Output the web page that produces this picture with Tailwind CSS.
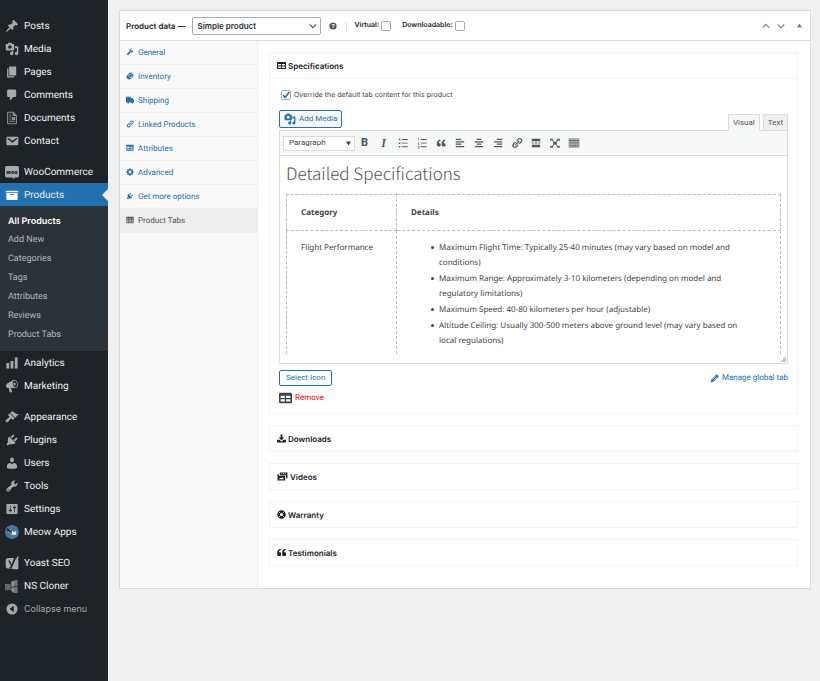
<!DOCTYPE html>
<html lang="en">
<head>
<meta charset="utf-8">
<meta name="viewport" content="width=device-width, initial-scale=1">
<title>Edit product</title>
<script src="https://cdn.jsdelivr.net/npm/@tailwindcss/browser@4"></script>
</head>
<body class="bg-[#f0f0f1] font-['Roboto','Liberation_Sans',sans-serif] text-[#3c434a] antialiased [text-rendering:geometricPrecision]">
<svg class="hidden" aria-hidden="true">
  <symbol id="pin" viewBox="0 0 20 20"><path d="M10.44 3.02l1.82-1.82 6.36 6.35-1.83 1.82c-1.05-.68-2.48-.57-3.41.36l-.75.75c-.92.93-1.04 2.35-.35 3.41l-1.83 1.82-2.41-2.41-2.8 2.79c-.42.42-3.38 2.71-3.8 2.29s1.86-3.39 2.28-3.81l2.79-2.79L4.1 9.36l1.83-1.82c1.05.69 2.48.57 3.4-.36l.75-.75c.93-.92 1.05-2.35.36-3.41z"/></symbol>
  <symbol id="media" viewBox="0 0 20 20"><path d="M13 11V4c0-.55-.45-1-1-1h-1.67L9 1H5L3.67 3H2c-.55 0-1 .45-1 1v7c0 .55.45 1 1 1h10c.55 0 1-.45 1-1zM7 4.5c1.38 0 2.5 1.12 2.5 2.5S8.38 9.5 7 9.5 4.5 8.38 4.5 7 5.62 4.5 7 4.5zM14 6h5v10.5c0 1.38-1.12 2.5-2.5 2.5S14 17.88 14 16.5s1.12-2.5 2.5-2.5c.17 0 .34.02.5.05V9h-3V6zm-4 8.05V13h2v3.5c0 1.38-1.12 2.5-2.5 2.5S7 17.88 7 16.5 8.12 14 9.5 14c.17 0 .34.02.5.05z"/></symbol>
  <symbol id="page" viewBox="0 0 20 20"><path d="M6 15V2h10v13H6zm-1 1h8v2H3V5h2v11z"/></symbol>
  <symbol id="comment" viewBox="0 0 20 20"><path d="M5 2h9c1.1 0 2 .9 2 2v7c0 1.1-.9 2-2 2h-2l-5 5v-5H5c-1.1 0-2-.9-2-2V4c0-1.1.9-2 2-2z"/></symbol>
  <symbol id="doc" viewBox="0 0 20 20"><path opacity=".8" fill-rule="evenodd" d="M3 1h9l5 5v13H3V1zm1.500 1.500v15h11V7H11V2.500zM6 5h3v1.300H6zm0 3h3v1.300H6zm0 3h3v1.300H6zm0 3h8v1.500H6zM10 8.500h4.500V13H10z"/></symbol>
  <symbol id="mail" viewBox="0 0 20 20"><path d="M3.870 4h13.250C18.370 4 19 4.590 19 5.790v8.420c0 1.190-.63 1.790-1.880 1.790H3.870c-1.250 0-1.880-.6-1.880-1.790V5.790c0-1.200.63-1.790 1.880-1.790zm6.620 8.600l6.740-5.530c.24-.2.43-.66.13-1.070-.29-.41-.82-.42-1.170-.17l-5.700 3.860L4.800 5.830c-.35-.25-.88-.24-1.170.17-.3.410-.11.870.13 1.070z"/></symbol>
  <symbol id="woo" viewBox="0 0 26 26"><path d="M3 2h20a3 3 0 0 1 3 3v15a3 3 0 0 1-3 3h-6l1 3-5-3H3a3 3 0 0 1-3-3V5a3 3 0 0 1 3-3z"/><text x="13" y="16" text-anchor="middle" font-family="Inter, sans-serif" font-weight="900" font-size="10" fill="#1d2327">woo</text></symbol>
  <symbol id="box" viewBox="0 0 20 20"><path d="M19 4v2H1V4h18zM2 7h16v10H2V7zm11 3V9H7v1h6z"/></symbol>
  <symbol id="bars" viewBox="0 0 20 20"><path d="M18 18V2h-4v16h4zm-6 0V7H8v11h4zm-6 0v-8H2v8h4z"/></symbol>
  <symbol id="horn" viewBox="0 0 20 20"><path d="M18.150 5.940c.46 1.620.38 3.220-.02 4.480-.42 1.280-1.260 2.180-2.300 2.480-.16.060-.26.060-.4.060-.06.020-.12.020-.18.020-.06.020-.14.020-.22.020h-6.800l2.220 5.500c.02.140-.06.260-.14.340-.08.100-.24.160-.34.160H6.950c-.1 0-.26-.06-.34-.16-.08-.08-.16-.2-.14-.34l-1-5.500H4.250l-.02-.02c-.5.060-1.080-.18-1.540-.62s-.88-1.080-1.060-1.880c-.24-.8-.2-1.560-.02-2.200.18-.62.58-1.080 1.060-1.300l.02-.02 9-5.400c.1-.06.180-.1.240-.16.060-.04.140-.08.240-.12.160-.08.280-.12.500-.18 1.040-.3 2.240.1 3.220.98s1.840 2.240 2.260 3.860zm-2.580 5.980h-.02c.4-.1.740-.34 1.040-.7.580-.7.860-1.760.86-3.040 0-.64-.1-1.300-.28-1.980-.34-1.360-1.020-2.500-1.780-3.240s-1.680-1.100-2.460-.88c-.82.220-1.400.960-1.700 2-.32 1.040-.28 2.360.060 3.720.38 1.360 1 2.500 1.800 3.240.78.740 1.620 1.100 2.480.88zm-2.540-7.080c.22-.04.42-.02.62.04.38.160.760.480 1.020 1s.42 1.200.42 1.780c0 .3-.04.560-.12.800-.18.480-.44.840-.86.940-.34.100-.8-.06-1.140-.4s-.64-.86-.78-1.500c-.18-.62-.12-1.240.02-1.720s.48-.84.82-.94z"/></symbol>
  <symbol id="brush" viewBox="0 0 20 20"><path d="M14.480 11.060L7.410 3.990l1.500-1.500c.5-.56 2.300-.47 3.510.32 1.210.8 1.430 1.280 2.910 2.100 1.180.64 2.450 1.260 4.450.85zm-.71.71L6.700 4.700 4.930 6.470c-.39.390-.39 1.020 0 1.410l1.060 1.060c.39.390.39 1.030 0 1.420-.6.600-1.430 1.110-2.210 1.690-.35.260-.7.530-1.010.84C1.430 14.230.4 16.080 1.400 17.070c.99 1 2.840-.03 4.180-1.360.31-.31.580-.66.850-1.020.57-.78 1.080-1.610 1.690-2.210.39-.39 1.020-.39 1.410 0l1.060 1.060c.39.390 1.020.39 1.410 0z"/></symbol>
  <symbol id="plug" viewBox="0 0 20 20"><path d="M13.110 4.360L9.870 7.600 8 5.730l3.240-3.240c.35-.34 1.050-.2 1.560.32.520.510.66 1.210.31 1.550zm-8 1.770l.91-1.120 9.010 9.010-1.190.84c-.71.710-2.630 1.160-3.820 1.160H6.140L4.900 17.260c-.59.590-1.540.59-2.120 0-.59-.58-.59-1.530 0-2.120l1.240-1.240v-3.880c0-1.130.4-3.190 1.090-3.890zm7.260 3.970l3.240-3.240c.34-.35 1.040-.21 1.550.31.520.510.66 1.210.31 1.550l-3.240 3.250z"/></symbol>
  <symbol id="user" viewBox="0 0 20 20"><path d="M10 9.250c-2.270 0-2.730-3.440-2.730-3.440C7 4.020 7.820 2 9.970 2c2.160 0 2.980 2.020 2.710 3.810 0 0-.41 3.440-2.680 3.440zm0 2.570L12.720 10c2.390 0 4.520 2.330 4.520 4.530v2.490s-3.650 1.130-7.240 1.130c-3.650 0-7.240-1.130-7.240-1.130v-2.490c0-2.250 1.940-4.480 4.470-4.480z"/></symbol>
  <symbol id="wrench" viewBox="0 0 20 20"><path d="M16.680 9.770c-1.340 1.340-3.300 1.670-4.950.99l-5.410 6.520c-.99.990-2.590.99-3.580 0s-.99-2.590 0-3.570l6.520-5.420c-.68-1.650-.35-3.610.99-4.950 1.280-1.280 3.120-1.620 4.720-1.060l-2.890 2.890 2.820 2.820 2.860-2.870c.53 1.580.18 3.390-1.080 4.650zM3.810 16.210c.4.390 1.040.39 1.430 0 .4-.4.4-1.040 0-1.430-.39-.4-1.030-.4-1.430 0-.39.390-.39 1.030 0 1.430z"/></symbol>
  <symbol id="sliders" viewBox="0 0 20 20"><path d="M18 16V4c0-.55-.45-1-1-1H3c-.55 0-1 .45-1 1v12c0 .55.45 1 1 1h14c.55 0 1-.45 1-1zM8 11h1c.55 0 1 .45 1 1s-.45 1-1 1H8v1.500c0 .28-.22.5-.5.5s-.5-.22-.5-.5V13H6c-.55 0-1-.45-1-1s.45-1 1-1h1V5.500c0-.28.22-.5.5-.5s.5.220.5.500V11zm5-2h-1c-.55 0-1-.45-1-1s.45-1 1-1h1V5.500c0-.28.22-.5.5-.5s.5.220.5.500V7h1c.55 0 1 .45 1 1s-.45 1-1 1h-1v5.500c0 .28-.22.5-.5.5s-.5-.22-.5-.5V9z"/></symbol>
  <symbol id="meow" viewBox="0 0 20 20"><circle cx="10" cy="10" r="10" fill="#4a75a3"/><path d="M3 5c1.500-.5 2.500.5 3 2l4.500 3.500-1 1.500-5-3.200C3 8 2.500 6.500 3 5z" fill="#1b1b1b"/><path d="M4.500 8.500L9 11.500l-.8 1.300-4-3z" fill="#e2823c"/><text x="12.500" y="13.800" text-anchor="middle" font-family="Inter, sans-serif" font-weight="800" font-size="7" fill="#fff">M</text></symbol>
  <symbol id="yoast" viewBox="0 0 20 20"><path d="M4 3h9.500l-.4 1H16L17.500 1H20l-1.500 3.500c.5.5.5 1 .5 1.500v13H10l1-1H4a3 3 0 0 1-3-3V6a3 3 0 0 1 3-3z"/><path d="M4.500 6.500h2.600l2.100 5.600L13.700 1.500h2.800L10.800 14.700c-.8 2-1.900 3-4 3v-2.300c1 0 1.500-.5 1.800-1.500z" fill="#1d2327"/></symbol>
  <symbol id="cloner" viewBox="0 0 20 20"><path d="M0 7h8v9H0z" opacity=".5"/><path d="M9 4l4-2v9H9zM9 12h4v8l-4-3z" opacity=".8"/><path d="M13 2l5-1v9h-5zM13 11h5v9h-5z" opacity=".6"/></symbol>
  <symbol id="collapse" viewBox="0 0 20 20"><path fill-rule="evenodd" d="M10 2a8 8 0 1 1 0 16 8 8 0 0 1 0-16zm2.500 3.500L6.500 10l6 4.500z"/></symbol>
  <symbol id="tag" viewBox="0 0 20 20"><path fill-rule="evenodd" d="M1 10.500L9.500 2l5-1 4.500 4.500-1 5L10 18.500c-2 1-4 .5-6-1.500s-4-4-3-6.500zM15 3.500a1.500 1.500 0 1 0 .1 0zM4.500 10.500l1 1 5.500-5.500-1-1zm4 4l1 1 5.500-5.500-1-1z"/></symbol>
  <symbol id="truck" viewBox="0 0 20 20"><path d="M0 2h12v3h4l4 5v6h-2a2.500 2.500 0 0 1-5 0H8a2.500 2.500 0 0 1-5 0H0z"/></symbol>
  <symbol id="link" viewBox="0 0 20 20"><path d="M17.740 2.760c1.680 1.690 1.680 4.410 0 6.100l-1.530 1.520c-1.120 1.120-2.700 1.470-4.140 1.090l2.620-2.610.76-.77.76-.76c.84-.84.84-2.200 0-3.040-.84-.85-2.200-.85-3.040 0l-.77.76-3.380 3.380c-.37-1.440-.02-3.020 1.100-4.140l1.520-1.530c1.690-1.680 4.420-1.680 6.100 0zM8.590 13.430l5.340-5.340c.42-.42.42-1.100 0-1.520-.44-.43-1.130-.39-1.530 0l-5.330 5.340c-.42.420-.42 1.100 0 1.520.44.430 1.130.39 1.520 0zm-.76 2.290l4.140-4.150c.38 1.440.03 3.020-1.090 4.140l-1.520 1.530c-1.690 1.680-4.410 1.680-6.100 0-1.680-1.680-1.680-4.420 0-6.100l1.530-1.520c1.120-1.120 2.700-1.470 4.140-1.100l-4.140 4.150c-.85.840-.85 2.200 0 3.050.84.840 2.200.84 3.040 0z"/></symbol>
  <symbol id="card" viewBox="0 0 20 20"><path fill-rule="evenodd" d="M1 2h18v15H1zm2 5v3h6V7zm0 5v1.500h6V12zm8-5v1.500h6V7zm0 3v1.500h6V10zm0 3v1.500h6V13z"/></symbol>
  <symbol id="gear" viewBox="0 0 20 20"><path fill-rule="evenodd" d="M8.300 1h3.400l.5 2.300 1.100.5 2-1.300 2.400 2.400-1.300 2 .5 1.100 2.300.5v3.300l-2.300.5-.5 1.100 1.300 2-2.400 2.400-2-1.300-1.100.5-.5 2.300H8.300l-.5-2.300-1.100-.5-2 1.300-2.400-2.400 1.300-2-.5-1.100L.8 11.800V8.500l2.300-.5.500-1.100-1.300-2 2.400-2.400 2 1.300 1.100-.5zM10 6.500a3.500 3.500 0 1 0 .1 0z"/></symbol>
  <symbol id="grid" viewBox="0 0 20 20"><path fill-rule="evenodd" d="M1 2h18v16H1zm2 4v2h3V6zm5 0v2h4V6zm6 0v2h3V6zM3 10v2h3v-2zm5 0v2h4v-2zm6 0v2h3v-2zM3 14v2h3v-2zm5 0v2h4v-2zm6 0v2h3v-2z"/></symbol>
  <symbol id="table" viewBox="0 1 20 16"><path fill-rule="evenodd" d="M2 1h16a2 2 0 0 1 2 2v12a2 2 0 0 1-2 2H2a2 2 0 0 1-2-2V3a2 2 0 0 1 2-2zm.5 4.500V9H9V5.500zm8.500 0V9h6.500V5.500zM2.500 11v3.500H9V11zm8.500 0v3.500h6.500V11z"/></symbol>
  <symbol id="quote" viewBox="0 0 20 20"><path d="M9.490 13.220c0-.74-.2-1.380-.61-1.900-.62-.78-1.830-.88-2.530-.72-.29-1.650 1.110-3.750 2.920-4.650L7.880 4c-2.730 1.300-5.420 4.280-4.960 8.050C3.210 14.430 4.590 16 6.540 16c.85 0 1.560-.25 2.120-.75s.83-1.180.83-2.030zm8.050 0c0-.74-.2-1.380-.61-1.900-.63-.78-1.830-.88-2.530-.72-.29-1.650 1.110-3.750 2.920-4.650L15.930 4c-2.730 1.300-5.410 4.280-4.950 8.050.29 2.380 1.660 3.950 3.610 3.950.85 0 1.560-.25 2.120-.75s.83-1.180.83-2.030z"/></symbol>
  <symbol id="ul" viewBox="0 0 20 20"><path d="M3 3h2.500v2.500H3zm5 .5h10V5H8zM3 9h2.500v2.500H3zm5 .5h10V11H8zM3 15h2.500v2.500H3zm5 .5h10V17H8z"/></symbol>
  <symbol id="ol" viewBox="0 0 20 20"><path d="M4 2h1v4H4zM3 9h2.500v1L4 12h1.500v.8H3v-.8L4.500 10H3zm0 6h2.500v4H3v-.8h1.500V17H3.500v-.7h1v-.5H3zM8 3.500h10V5H8zm0 6h10V11H8zm0 6h10V17H8z"/></symbol>
  <symbol id="left" viewBox="0 0 20 20"><path d="M12 5V3H3v2h9zm5 4V7H3v2h14zm-5 4v-2H3v2h9zm5 4v-2H3v2h14z"/></symbol>
  <symbol id="center" viewBox="0 0 20 20"><path d="M14 5V3H6v2h8zm3 4V7H3v2h14zm-3 4v-2H6v2h8zm3 4v-2H3v2h14z"/></symbol>
  <symbol id="right" viewBox="0 0 20 20"><path d="M17 5V3H8v2h9zm0 4V7H3v2h14zm0 4v-2H8v2h9zm0 4v-2H3v2h14z"/></symbol>
  <symbol id="more" viewBox="0 0 20 20"><path d="M17 7V3H3v4h14zM6 11V9H3v2h3zm6 0V9H8v2h4zm5 0V9h-3v2h3zm0 6v-4H3v4h14z"/></symbol>
  <symbol id="expand" viewBox="0 0 20 20"><path d="M7 8h6v5H7zM2 3h5L5.700 4.300 8.200 6.800 7 8 4.400 5.500 2 7zm16 0h-5l1.300 1.300-2.500 2.500L13 8l2.600-2.500L18 7zM2 18h5l-1.300-1.300 2.500-2.500L7 13l-2.600 2.500L2 14zm16 0h-5l1.300-1.300-2.500-2.500L13 13l2.600 2.500L18 14z"/></symbol>
  <symbol id="keys" viewBox="0 0 20 20"><path d="M1 2h18v16H1z" opacity=".5"/><path d="M2 5h3v1.500H2zm4 0h2v1.500H6zm3 0h2v1.500H9zm3 0h2v1.500h-2zm3 0h3v1.500h-3zM2 9h2v1.500H2zm3 0h2v1.500H5zm3 0h2v1.500H8zm3 0h2v1.500h-2zm3 0h4v1.500h-4zM2 14h3v1.500H2zm4 0h8v1.500H6zm9 0h3v1.500h-3z"/></symbol>
  <symbol id="pencil" viewBox="0 0 20 20"><path d="M13.500 1.500c.8-.8 1.700-.8 2.500 0l2.500 2.500c.8.8.8 1.700 0 2.500L8 17l-6.500 1.500L3 12z"/><path d="M5.500 12.500L13 5M8 14.800l7.300-7.500" stroke="#fff" stroke-width="1.300"/></symbol>
  <symbol id="download" viewBox="0 0 20 20"><path d="M8 1h4v7h4l-6 6.500L4 8h4zM0 13h5.500l4.500 4 4.500-4H20v6H0z"/></symbol>
  <symbol id="photos" viewBox="0 0 22 20"><path fill-rule="evenodd" d="M5 1h17v13h-3V7H5zm3 2v2h2V3zm4 0v2h2V3zm4 0v2h2V3z"/><path fill-rule="evenodd" d="M0 5h3v3.500h14V19H0zm2.500 11h12l-3.500-4.500L8 14l-1.500-1z"/></symbol>
  <symbol id="ring" viewBox="0 0 20 20"><circle cx="10" cy="10" r="6.500" fill="none" stroke="currentColor" stroke-width="6"/><path d="M3.500 3.500l3.500 3.500M13 13l3.500 3.500M16.500 3.500L13 7M7 13l-3.500 3.500" stroke="#fff" stroke-width="1.500"/></symbol>
  <symbol id="quotel" viewBox="0 0 20 20"><path d="M8.500 2v3C6.500 5 4.500 6 4.500 9.500H7a2 2 0 0 1 2 2V16a2 2 0 0 1-2 2H3a2.500 2.500 0 0 1-2.500-2.500V10C.5 5 3.500 2 8.500 2zm11 0v3c-2 0-4 1-4 4.500H18a2 2 0 0 1 2 2V16a2 2 0 0 1-2 2h-4a2.500 2.500 0 0 1-2.500-2.500V10c0-5 3-8 8-8z"/></symbol>
  <symbol id="down" viewBox="0 0 10 10"><path d="M1 3l4 4 4-4" fill="none" stroke="currentColor" stroke-width="1.500"/></symbol>
  <symbol id="up" viewBox="0 0 10 10"><path d="M1 7l4-4 4 4" fill="none" stroke="currentColor" stroke-width="1.500"/></symbol>
  <symbol id="tri" viewBox="0 0 10 10"><path d="M0 1h10L5 9z"/></symbol>
  <symbol id="triup" viewBox="0 0 10 10"><path d="M0 9h10L5 1z"/></symbol>
  <symbol id="check" viewBox="0 0 10 10"><path d="M2 5.200l2.200 2.300L8.300 2" fill="none" stroke="currentColor" stroke-width="1.600"/></symbol>
  <symbol id="help" viewBox="0 0 20 20"><circle cx="10" cy="10" r="9"/><text x="10" y="15" text-anchor="middle" font-family="Inter, sans-serif" font-weight="800" font-size="14" fill="#fff">?</text></symbol>
  <symbol id="grip" viewBox="0 0 10 10"><path d="M10 0v10H0z"/></symbol>
</svg>

<div class="flex min-h-screen">
  <nav aria-label="Admin menu" class="w-[108px] shrink-0 bg-[#1d2327] pt-[14px] text-[10px] text-[#f0f0f1]">
    <ul class="[&>li>a]:flex [&>li>a]:h-[23px] [&>li>a]:items-center [&>li>a]:gap-[5px] [&>li>a]:pt-px [&>li>a]:pl-[5px] [&>li>a>svg]:size-[14px] [&>li>a>svg]:shrink-0 [&>li>a>svg]:fill-[#a7aaad] [&>li>a>svg]:text-[#a7aaad]">
      <li><a href="#"><svg><use href="#pin"/></svg>Posts</a></li>
      <li><a href="#"><svg><use href="#media"/></svg>Media</a></li>
      <li><a href="#"><svg><use href="#page"/></svg>Pages</a></li>
      <li><a href="#"><svg><use href="#comment"/></svg>Comments</a></li>
      <li><a href="#"><svg><use href="#doc"/></svg>Documents</a></li>
      <li><a href="#"><svg><use href="#mail"/></svg>Contact</a></li>
      <li class="mt-2"><a href="#"><svg><use href="#woo"/></svg>WooCommerce</a></li>
      <li class="relative bg-[#2271b1]"><a href="#" aria-current="true"><svg class="fill-white!"><use href="#box"/></svg>Products</a>
        <span class="absolute top-[6px] right-0 border-y-6 border-r-6 border-y-transparent border-r-[#f0f0f1]"></span></li>
      <li>
        <ul class="bg-[#2c3338] py-[6px] pl-2 text-[9px] text-[#b4b7ba] [&_a]:flex [&_a]:h-[19px] [&_a]:items-center [&_a]:pt-px">
          <li><a href="#" class="font-['Inter',sans-serif] font-semibold text-white">All Products</a></li>
          <li><a href="#">Add New</a></li>
          <li><a href="#">Categories</a></li>
          <li><a href="#">Tags</a></li>
          <li><a href="#">Attributes</a></li>
          <li><a href="#">Reviews</a></li>
          <li><a href="#">Product Tabs</a></li>
        </ul>
      </li>
      <li><a href="#"><svg><use href="#bars"/></svg>Analytics</a></li>
      <li><a href="#"><svg><use href="#horn"/></svg>Marketing</a></li>
      <li class="mt-2"><a href="#"><svg><use href="#brush"/></svg>Appearance</a></li>
      <li><a href="#"><svg><use href="#plug"/></svg>Plugins</a></li>
      <li><a href="#"><svg><use href="#user"/></svg>Users</a></li>
      <li><a href="#"><svg><use href="#wrench"/></svg>Tools</a></li>
      <li><a href="#"><svg><use href="#sliders"/></svg>Settings</a></li>
      <li><a href="#"><svg><use href="#meow"/></svg>Meow Apps</a></li>
      <li class="mt-2"><a href="#"><svg><use href="#yoast"/></svg>Yoast SEO</a></li>
      <li><a href="#"><svg><use href="#cloner"/></svg>NS Cloner</a></li>
    </ul>
    <button type="button" class="flex h-[23px] items-center gap-[5px] pl-[5px] font-['Inter',sans-serif] text-[9px] text-[#a7aaad]"><svg class="size-[14px] fill-[#a7aaad]"><use href="#collapse"/></svg>Collapse menu</button>
  </nav>

  <main class="min-w-0 flex-1 py-[10px] pr-[9px] pl-[11px]">
    <section class="border border-[#dcdcde] bg-white">
      <header class="flex h-[30px] items-center border-b border-[#dcdcde] pl-[6px] font-['Inter',sans-serif] text-[8px] font-semibold text-[#1d2327]">
        <h2>Product data —</h2>
        <div class="relative ml-[7px]">
          <select aria-label="Product type" class="block h-[18px] w-[129px] appearance-none rounded-[2px] border border-[#a7aaad] bg-white pl-1 text-[8px] font-semibold text-[#2c3338]"><option>Simple product</option></select>
          <svg class="pointer-events-none absolute top-[5px] right-1 size-2 text-[#50575e]"><use href="#down"/></svg>
        </div>
        <svg class="ml-2 size-2 fill-[#50575e]"><use href="#help"/></svg>
        <span class="ml-[9px] h-2 w-px bg-[#dcdcde]"></span>
        <label class="ml-[7px] flex items-center gap-[2px] text-[7px]">Virtual:<input type="checkbox" class="size-[10px] appearance-none rounded-[2px] border border-[#a7aaad] bg-white"></label>
        <label class="ml-[11px] flex items-center gap-[2px] text-[7px]">Downloadable:<input type="checkbox" class="size-[10px] appearance-none rounded-[2px] border border-[#a7aaad] bg-white"></label>
        <div class="ml-auto flex items-center pr-2 text-[#787c82]">
          <button type="button" aria-label="Move up" class="mr-[7px]"><svg class="size-2"><use href="#up"/></svg></button>
          <button type="button" aria-label="Move down" class="mr-3"><svg class="size-2"><use href="#down"/></svg></button>
          <button type="button" aria-label="Toggle panel"><svg class="size-[5px] fill-[#787c82]"><use href="#triup"/></svg></button>
        </div>
      </header>

      <div class="flex">
        <ul class="w-[138px] shrink-0 border-r border-[#eee] bg-[#fafafa] text-[8px] text-[#2271b1] [&_a]:flex [&_a]:h-6 [&_a]:items-center [&_a]:gap-1 [&_a]:border-b [&_a]:border-[#eee] [&_a]:pt-px [&_a]:pl-[6px] [&_svg]:mb-[2px] [&_svg]:size-2 [&_svg]:fill-current">
          <li><a href="#"><svg><use href="#wrench"/></svg>General</a></li>
          <li><a href="#"><svg><use href="#tag"/></svg>Inventory</a></li>
          <li><a href="#"><svg><use href="#truck"/></svg>Shipping</a></li>
          <li><a href="#"><svg><use href="#link"/></svg>Linked Products</a></li>
          <li><a href="#"><svg><use href="#card"/></svg>Attributes</a></li>
          <li><a href="#"><svg><use href="#gear"/></svg>Advanced</a></li>
          <li><a href="#"><svg><use href="#plug"/></svg>Get more options</a></li>
          <li><a href="#" aria-current="true" class="bg-[#eee] text-[#555]"><svg><use href="#grid"/></svg>Product Tabs</a></li>
        </ul>

        <div class="flex min-w-0 flex-1 flex-col gap-[11px] pt-[11px] pr-3 pb-[22px] pl-[11px] text-[#1d2327] [&>section]:border [&>section]:border-[#f3f3f4] [&_h3]:flex [&_h3]:h-[25px] [&_h3]:items-center [&_h3]:gap-[2px] [&_h3]:pl-[7px] [&_h3]:font-['Inter',sans-serif] [&_h3]:text-[8px] [&_h3]:font-semibold [&_h3>svg]:size-[9px] [&_h3>svg]:fill-current">
          <section>
            <h3><svg><use href="#table"/></svg>Specifications</h3>
            <div class="border-t border-[#f3f3f4] px-[9px] pt-[10px] pb-[9px] text-[#3c434a]">
              <label class="flex h-3 items-center gap-[3px] pl-[2px] font-['Inter',sans-serif] text-[7px]">
                <span class="relative block size-[10px]">
                  <input type="checkbox" checked class="block size-[10px] appearance-none rounded-[2px] border border-[#a7aaad] bg-white">
                  <svg class="pointer-events-none absolute inset-0 size-[10px] text-[#2271b1]"><use href="#check"/></svg>
                </span>Override the default tab content for this product</label>

              <div class="mt-[9px] flex items-start justify-between">
                <button type="button" class="flex h-[18px] items-center gap-[3px] rounded-[2px] border border-[#2271b1] bg-[#f6f7f7] px-1 text-[8px] text-[#2271b1]"><svg class="size-3 fill-current"><use href="#media"/></svg>Add Media</button>
                <div class="relative z-10 mt-1 -mb-px flex gap-[3px] text-[8px] text-[#50575e]">
                  <button type="button" class="h-[17px] border border-b-0 border-[#dcdcde] bg-[#f6f7f7] px-1">Visual</button>
                  <button type="button" class="h-[16px] border border-b-0 border-[#dcdcde] bg-[#f0f0f1] px-1">Text</button>
                </div>
              </div>

              <div class="border border-[#dcdcde] bg-white">
                <div class="flex h-[25px] items-center border-b border-[#dcdcde] bg-[#f6f7f7] pl-[3px] text-[#50575e] [&>button]:grid [&>button]:w-[19px] [&>button]:place-items-center [&>button>svg]:size-3 [&>button>svg]:fill-current">
                  <div class="relative">
                    <select aria-label="Block format" class="block h-[15px] w-[72px] appearance-none border border-[#dcdcde] bg-white pl-[5px] text-[8px] text-[#3c434a]"><option>Paragraph</option></select>
                    <svg class="pointer-events-none absolute top-[5px] right-1 size-[5px] fill-[#3c434a]"><use href="#tri"/></svg>
                  </div>
                  <button type="button" aria-label="Bold" class="text-[11px] leading-3 font-extrabold">B</button>
                  <button type="button" aria-label="Italic" class="font-['Liberation_Serif',serif] text-[12px] leading-3 font-bold italic">I</button>
                  <button type="button" aria-label="Bulleted list"><svg><use href="#ul"/></svg></button>
                  <button type="button" aria-label="Numbered list"><svg><use href="#ol"/></svg></button>
                  <button type="button" aria-label="Blockquote"><svg><use href="#quote"/></svg></button>
                  <button type="button" aria-label="Align left"><svg><use href="#left"/></svg></button>
                  <button type="button" aria-label="Align center"><svg><use href="#center"/></svg></button>
                  <button type="button" aria-label="Align right"><svg><use href="#right"/></svg></button>
                  <button type="button" aria-label="Insert link"><svg><use href="#link"/></svg></button>
                  <button type="button" aria-label="Read more"><svg><use href="#more"/></svg></button>
                  <button type="button" aria-label="Fullscreen"><svg><use href="#expand"/></svg></button>
                  <button type="button" aria-label="Toolbar toggle"><svg><use href="#keys"/></svg></button>
                </div>
                <div class="relative px-[6px] pb-[9px] font-['Noto_Sans',sans-serif] text-[8px] leading-[15px] text-[#444]">
                  <h1 class="pt-1 pb-2 font-['Noto_Sans_CJK_SC','Noto_Sans',sans-serif] text-[17px] leading-[26px] font-light text-[#555]">Detailed Specifications</h1>
                  <table class="w-full border-collapse text-left [&_td]:border [&_td]:border-dashed [&_td]:border-[#bbb] [&_td]:px-[14px] [&_th]:border [&_th]:border-dashed [&_th]:border-[#bbb] [&_th]:px-[14px]">
                    <thead>
                      <tr class="h-9"><th class="w-[110px] font-bold">Category</th><th class="font-bold">Details</th></tr>
                    </thead>
                    <tbody>
                      <tr class="align-top"><td class="border-b-0! pt-[9px]">Flight Performance</td>
                        <td class="border-b-0! pt-[9px] pb-[6px]">
                          <ul class="flex flex-col gap-px pl-7 [&>li]:relative [&>li]:pr-4 [&>li]:before:absolute [&>li]:before:top-[6px] [&>li]:before:-left-2 [&>li]:before:size-[3px] [&>li]:before:rounded-full [&>li]:before:bg-[#444] [&>li]:before:content-['']">
                            <li>Maximum Flight Time: Typically 25-40 minutes (may vary based on model and conditions)</li>
                            <li>Maximum Range: Approximately 3-10 kilometers (depending on model and regulatory limitations)</li>
                            <li>Maximum Speed: 40-80 kilometers per hour (adjustable)</li>
                            <li>Altitude Ceiling: Usually 300-500 meters above ground level (may vary based on local regulations)</li>
                          </ul>
                        </td></tr>
                    </tbody>
                  </table>
                  <svg class="absolute right-px bottom-px size-[6px] fill-[#c3c4c7]"><use href="#grip"/></svg>
                </div>
              </div>

              <div class="mt-[6px] flex items-center justify-between text-[8px]">
                <button type="button" class="h-4 rounded-[2px] border border-[#2271b1] bg-white px-[6px] text-[#2271b1]">Select Icon</button>
                <a href="#" class="flex items-center gap-[3px] text-[#2271b1]"><svg class="size-[9px] fill-current"><use href="#pencil"/></svg>Manage global tab</a>
              </div>
              <div class="mt-[6px] flex items-center gap-[3px] text-[8px] leading-3"><svg class="h-3 w-[13px] fill-[#3c434a]"><use href="#table"/></svg><a href="#" class="text-[#f00]">Remove</a></div>
            </div>
          </section>
          <section><h3><svg><use href="#download"/></svg>Downloads</h3></section>
          <section><h3><svg class="w-[11px]!"><use href="#photos"/></svg>Videos</h3></section>
          <section><h3><svg><use href="#ring"/></svg>Warranty</h3></section>
          <section><h3><svg><use href="#quotel"/></svg>Testimonials</h3></section>
        </div>
      </div>
    </section>
  </main>
</div>
</body>
</html>
